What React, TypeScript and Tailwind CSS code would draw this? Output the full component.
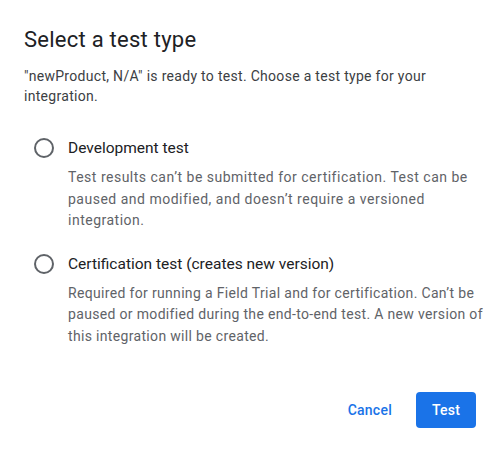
export default function App() {
  const options = [
    {
      label: 'Development test',
      desc: "Test results can\u2019t be submitted for certification. Test can be paused and modified, and doesn\u2019t require a versioned integration.",
      tracking: 'tracking-[0.5px]',
    },
    {
      label: 'Certification test (creates new version)',
      desc: "Required for running a Field Trial and for certification. Can\u2019t be paused or modified during the end-to-end test. A new version of this integration will be created.",
      tracking: 'tracking-[0.33px]',
    },
  ];

  return (
    <div className="w-[500px] h-[453px] bg-white rounded-md font-['Roboto',sans-serif] flex flex-col px-6 pt-[26px]">
      <h1 className="text-[22px] leading-7 tracking-[0.25px] text-[#202124]">Select a test type</h1>
      <p className="mt-3 text-sm leading-5 tracking-[0.3px] text-[#3c4043]">
        "newProduct, N/A" is ready to test. Choose a test type for your integration.
      </p>

      <div className="mt-[30px] flex flex-col gap-[20px]">
        {options.map((opt) => (
          <div key={opt.label} className="flex flex-col pl-[10px]">
            <div className="flex items-center gap-[14px]">
              <span className="w-5 h-5 rounded-full border-2 border-[#5f6368]" />
              <span className="text-[15.5px] leading-6 text-[#202124]">{opt.label}</span>
            </div>
            <p className={`mt-[7px] pl-[34px] -mr-2 text-sm leading-[21.5px] text-[#5f6368] ${opt.tracking}`}>
              {opt.desc}
            </p>
          </div>
        ))}
      </div>

      <div className="mt-auto mb-[25px] flex justify-end items-center gap-2">
        <button className="h-9 px-4 text-sm font-medium tracking-[0.25px] text-[#1a73e8] rounded">Cancel</button>
        <button className="h-9 w-[60px] text-sm font-medium tracking-[0.25px] text-white bg-[#1a73e8] rounded">Test</button>
      </div>
    </div>
  );
}
